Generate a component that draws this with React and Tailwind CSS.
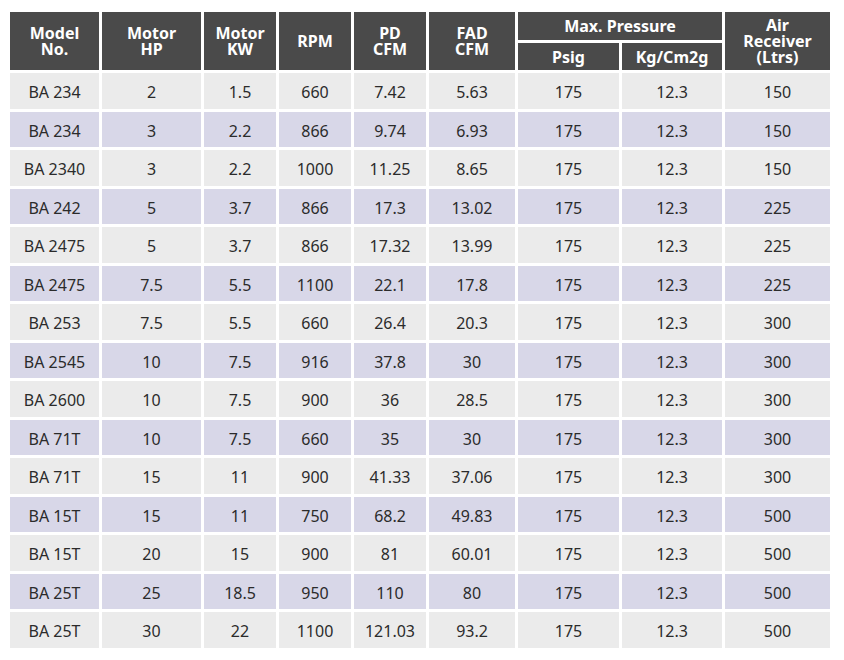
const ROWS = [
  ["BA 234", "2", "1.5", "660", "7.42", "5.63", "175", "12.3", "150"],
  ["BA 234", "3", "2.2", "866", "9.74", "6.93", "175", "12.3", "150"],
  ["BA 2340", "3", "2.2", "1000", "11.25", "8.65", "175", "12.3", "150"],
  ["BA 242", "5", "3.7", "866", "17.3", "13.02", "175", "12.3", "225"],
  ["BA 2475", "5", "3.7", "866", "17.32", "13.99", "175", "12.3", "225"],
  ["BA 2475", "7.5", "5.5", "1100", "22.1", "17.8", "175", "12.3", "225"],
  ["BA 253", "7.5", "5.5", "660", "26.4", "20.3", "175", "12.3", "300"],
  ["BA 2545", "10", "7.5", "916", "37.8", "30", "175", "12.3", "300"],
  ["BA 2600", "10", "7.5", "900", "36", "28.5", "175", "12.3", "300"],
  ["BA 71T", "10", "7.5", "660", "35", "30", "175", "12.3", "300"],
  ["BA 71T", "15", "11", "900", "41.33", "37.06", "175", "12.3", "300"],
  ["BA 15T", "15", "11", "750", "68.2", "49.83", "175", "12.3", "500"],
  ["BA 15T", "20", "15", "900", "81", "60.01", "175", "12.3", "500"],
  ["BA 25T", "25", "18.5", "950", "110", "80", "175", "12.3", "500"],
  ["BA 25T", "30", "22", "1100", "121.03", "93.2", "175", "12.3", "500"],
];

const WIDTHS = ["w-[89px]", "w-[99px]", "w-[72px]", "w-[72px]", "w-[72px]", "w-[86px]", "w-[101px]", "w-[100px]", "w-[105px]"];

const th = "bg-[#4a4a4a] text-white font-bold text-[16px] leading-[16px] text-center align-middle p-0";

export default function App() {
  return (
    <div className="w-[844px] h-[660px] bg-white pl-[7px] pt-[9px]" style={{ fontFamily: '"Noto Sans", "Open Sans", sans-serif' }}>
      <table className="table-fixed border-separate border-spacing-[3px]">
        <colgroup>
          {WIDTHS.map((w, i) => (
            <col key={i} className={w} />
          ))}
        </colgroup>
        <thead>
          <tr className="h-[28px]">
            <th rowSpan={2} className={th}>Model<br />No.</th>
            <th rowSpan={2} className={th}>Motor<br />HP</th>
            <th rowSpan={2} className={th}>Motor<br />KW</th>
            <th rowSpan={2} className={th}>RPM</th>
            <th rowSpan={2} className={th}>PD<br />CFM</th>
            <th rowSpan={2} className={th}>FAD<br />CFM</th>
            <th colSpan={2} className={th}>Max. Pressure</th>
            <th rowSpan={2} className={`${th} leading-[15px]`}>Air<br />Receiver<br />(Ltrs)</th>
          </tr>
          <tr className="h-[27px]">
            <th className={th}>Psig</th>
            <th className={th}>Kg/Cm2g</th>
          </tr>
        </thead>
        <tbody>
          {ROWS.map((row, r) => (
            <tr key={r} className="h-[35.5px]">
              {row.map((v, c) => (
                <td
                  key={c}
                  className={`${r % 2 === 0 ? "bg-[#ebebeb]" : "bg-[#d8d7e8]"} text-[#2b2b2b] text-[16px] leading-none text-center align-middle p-0 pt-[3px]`}
                >
                  {v}
                </td>
              ))}
            </tr>
          ))}
        </tbody>
      </table>
    </div>
  );
}
